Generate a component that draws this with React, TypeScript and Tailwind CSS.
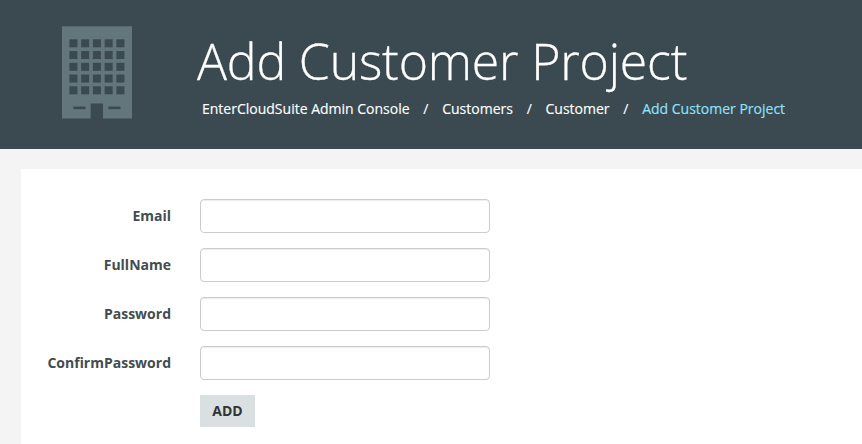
const fields = [
  { label: "Email", type: "email" },
  { label: "FullName", type: "text" },
  { label: "Password", type: "password" },
  { label: "ConfirmPassword", type: "password" },
];

const crumbs = ["EnterCloudSuite Admin Console", "Customers", "Customer"];

const steps = [0, 1, 2, 3, 4];

function BuildingIcon() {
  return (
    <svg className="block h-[93px] w-[71px] shrink-0" viewBox="0 0 71 93" aria-hidden="true">
      <path fill="#62767c" d="M0 .3H70V92.5H41V77.5H28.7V92.5H0Z" />
      <g fill="#3a4a50">
        {steps.map((row) =>
          steps.map((col) => (
            <rect key={`${row}-${col}`} x={7.4 + col * 11.75} y={13.3 + row * 11.75} width="8" height="8" />
          )),
        )}
        <rect x="11.3" y="80.6" width="12.2" height="2.6" />
        <rect x="46.3" y="80.6" width="12.2" height="2.6" />
      </g>
    </svg>
  );
}

export default function App() {
  return (
    <div className="flex h-[444px] w-full flex-col overflow-hidden bg-[#f4f4f4] font-['Open_Sans','Noto_Sans',sans-serif] text-sm text-[#444c50]">
      <header className="flex h-[149px] shrink-0 items-start bg-[#3a4a50] pl-[61.5px] pt-[26px] text-white">
        <BuildingIcon />
        <div className="ml-[64.5px] pt-[9px]">
          <h1 className="whitespace-nowrap text-[50px] font-light leading-[52px] tracking-[-0.18px] [-webkit-text-stroke:0.3px_white]">
            Add Customer Project
          </h1>
          <nav className="mt-3 flex pl-[5px] leading-5 [-webkit-text-stroke:0.15px_currentColor]">
            {crumbs.map((crumb) => (
              <span key={crumb} className="flex whitespace-nowrap">
                <a>{crumb}</a>
                <span className="w-[32.6px] text-center">/</span>
              </span>
            ))}
            <span className="whitespace-nowrap text-[#8fe3ff]">Add Customer Project</span>
          </nav>
        </div>
      </header>
      <main className="ml-[21px] mt-5 flex-1 bg-white pt-[30px]">
        <form className="flex flex-col gap-[15px]">
          {fields.map(({ label, type }) => (
            <label key={label} className="flex h-[34px] items-center">
              <span className="w-[150px] text-right font-bold leading-5">{label}</span>
              <input
                type={type}
                className="ml-[29px] h-[34px] w-[290px] rounded border border-[#ccc] bg-white px-3 shadow-[inset_0_1px_1px_rgba(0,0,0,0.075)] outline-none"
              />
            </label>
          ))}
          <button type="button" className="ml-[179px] h-8 w-[55px] bg-[#dadfe2] font-bold leading-5 text-[#333]">
            ADD
          </button>
        </form>
      </main>
    </div>
  );
}
